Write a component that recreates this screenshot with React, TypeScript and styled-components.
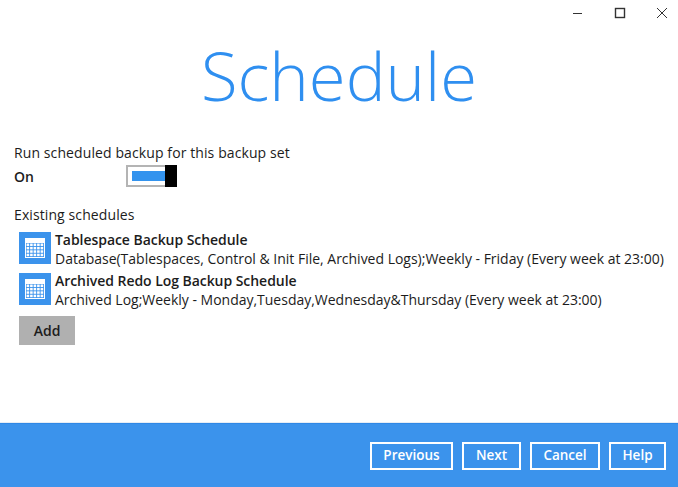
import React from "react";
import styled, { createGlobalStyle } from "styled-components";

const Global = createGlobalStyle`
  html, body { margin: 0; padding: 0; background: #fff; }
  body { font-family: "Open Sans", "Noto Sans", sans-serif; }
`;

const Page = styled.div`
  width: 678px;
  height: 487px;
  display: flex;
  flex-direction: column;
  overflow: hidden;
  background: #fff;
  color: #1c1c1c;
`;

const TitleBar = styled.div`
  height: 26px;
  display: flex;
  justify-content: flex-end;
  align-items: flex-start;
  gap: 26px;
  padding: 6px 7px 0 0;
  box-sizing: border-box;
`;

const WinIcon = styled.svg`
  width: 16px;
  height: 14px;
  display: block;
  color: #333;
`;

const Title = styled.h1`
  margin: 9px 0 0;
  font-size: 67px;
  line-height: 80px;
  font-weight: 300;
  color: #2f8ff0;
  text-align: center;
`;

const Content = styled.main`
  flex: 1;
  padding: 0 14px;
  display: flex;
  flex-direction: column;
  border-bottom: 1px solid #e6edf5;
`;

const Label = styled.div`
  margin-top: 28px;
  font-size: 14px;
  line-height: 20px;
  letter-spacing: 0.1px;
`;

const ToggleRow = styled.div`
  margin-top: 1px;
  height: 24px;
  display: flex;
  align-items: center;
  font-size: 14px;
  font-weight: 600;
`;

const StateText = styled.span`
  width: 112px;
`;

const Toggle = styled.div`
  width: 51px;
  height: 22px;
  box-sizing: border-box;
  border: 2px solid #b4b4b4;
  background: #fff;
  padding: 4px 0 4px 4px;
  display: flex;
  position: relative;
`;

const ToggleFill = styled.div`
  flex: 1;
  background: #3393ee;
`;

const ToggleThumb = styled.div`
  position: absolute;
  right: -2px;
  top: -2px;
  width: 12px;
  height: 22px;
  background: #000;
`;

const SectionLabel = styled(Label)`
  margin-top: 17px;
`;

const List = styled.div`
  margin: 5px 0 0 5px;
  display: flex;
  flex-direction: column;
  gap: 3px;
`;

const Row = styled.div`
  display: flex;
  gap: 4px;
  height: 38px;
`;

const IconBox = styled.div`
  width: 32px;
  height: 32px;
  margin-top: 2px;
  background: #3b93ec;
  display: flex;
  align-items: center;
  justify-content: center;
  flex: none;
`;

const RowText = styled.div`
  display: flex;
  flex-direction: column;
  font-size: 14px;
  line-height: 19px;
  white-space: nowrap;
  letter-spacing: -0.01px;
`;

const RowTitle = styled.span`
  font-weight: 600;
  letter-spacing: -0.05px;
`;

const AddButton = styled.button`
  margin: 7px 0 0 5px;
  width: 56px;
  height: 29px;
  padding: 0;
  border: 0;
  background: #b0b0b0;
  color: #1c1c1c;
  font: 600 14px "Open Sans", "Noto Sans", sans-serif;
  align-self: flex-start;
`;

const Footer = styled.footer`
  height: 64px;
  background: #3b93ec;
  border-top: 1px solid #2f88e6;
  box-sizing: border-box;
  display: flex;
  justify-content: flex-end;
  align-items: flex-start;
  gap: 9px;
  padding: 18px 12px 0 0;
`;

const FooterButton = styled.button<{ $w: number }>`
  width: ${(p) => p.$w}px;
  height: 28px;
  box-sizing: border-box;
  padding: 0 0 3px;
  background: transparent;
  border: 2px solid #fff;
  color: #fff;
  font: 600 13.5px "Open Sans", "Noto Sans", sans-serif;
`;

const CalendarIcon = () => (
  <svg width="20" height="20" viewBox="0 0 20 20">
    <rect x="0" y="0" width="20" height="20" fill="#fff" />
    <rect x="1" y="5" width="18" height="14" fill="#3b93ec" />
    {[0, 1, 2, 3].map((r) =>
      [0, 1, 2, 3, 4].map((c) => (
        <rect key={`${r}-${c}`} x={1.6 + c * 3.5} y={5.5 + r * 3.4} width="2.6" height="2.5" fill="#fff" />
      ))
    )}
  </svg>
);

export default function App() {
  return (
    <Page>
      <Global />
      <TitleBar>
        <WinIcon viewBox="0 0 16 14">
          <path d="M2 7.5h9" stroke="currentColor" strokeWidth="1" />
        </WinIcon>
        <WinIcon viewBox="0 0 16 14">
          <rect x="2.5" y="2.5" width="9" height="9" fill="none" stroke="currentColor" strokeWidth="1.4" />
        </WinIcon>
        <WinIcon viewBox="0 0 16 14">
          <path d="M2 2l10 10M12 2L2 12" stroke="currentColor" strokeWidth="1" fill="none" />
        </WinIcon>
      </TitleBar>
      <Title>Schedule</Title>
      <Content>
        <Label>Run scheduled backup for this backup set</Label>
        <ToggleRow>
          <StateText>On</StateText>
          <Toggle>
            <ToggleFill />
            <ToggleThumb />
          </Toggle>
        </ToggleRow>
        <SectionLabel>Existing schedules</SectionLabel>
        <List>
          <Row>
            <IconBox><CalendarIcon /></IconBox>
            <RowText>
              <RowTitle>Tablespace Backup Schedule</RowTitle>
              <span>Database(Tablespaces, Control &amp; Init File, Archived Logs);Weekly - Friday (Every week at 23:00)</span>
            </RowText>
          </Row>
          <Row>
            <IconBox><CalendarIcon /></IconBox>
            <RowText>
              <RowTitle>Archived Redo Log Backup Schedule</RowTitle>
              <span>Archived Log;Weekly - Monday,Tuesday,Wednesday&amp;Thursday (Every week at 23:00)</span>
            </RowText>
          </Row>
        </List>
        <AddButton>Add</AddButton>
      </Content>
      <Footer>
        <FooterButton $w={83}>Previous</FooterButton>
        <FooterButton $w={59}>Next</FooterButton>
        <FooterButton $w={70}>Cancel</FooterButton>
        <FooterButton $w={57}>Help</FooterButton>
      </Footer>
    </Page>
  );
}
